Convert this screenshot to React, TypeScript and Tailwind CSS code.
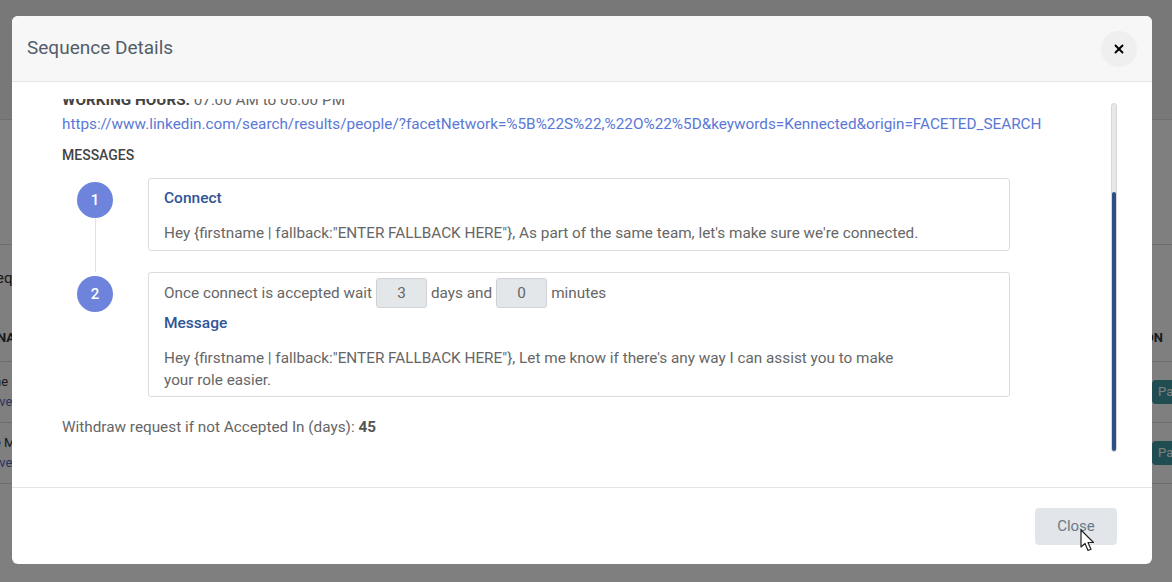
import { X } from 'lucide-react'

const LINK =
  'https://www.linkedin.com/search/results/people/?facetNetwork=%5B%22S%22,%22O%22%5D&keywords=Kennected&origin=FACETED_SEARCH'

const CONNECT_MSG =
  'Hey {firstname | fallback:"ENTER FALLBACK HERE"}, As part of the same team, let\'s make sure we\'re connected.'

const FOLLOW_MSG =
  'Hey {firstname | fallback:"ENTER FALLBACK HERE"}, Let me know if there\'s any way I can assist you to make your role easier.'

function BackgroundPage() {
  return (
    <div className="absolute inset-0 flex flex-col bg-white text-[13px] text-[#333]">
      <div className="h-[120px] border-b border-[#ddd] bg-[#f1f1f1]" />
      <div className="h-[125px] border-b border-[#ddd]" />
      <div className="pt-[22px]">
        <span className="-ml-[4px] text-[15px]">equests</span>
      </div>
      <div className="mt-[38px] flex items-center justify-between border-b border-[#ddd] pb-[14px] font-bold">
        <span className="-ml-[3px]">NAME</span>
        <span className="mr-[9px]">ACTION</span>
      </div>
      <div className="flex items-center justify-between border-b border-[#ddd] py-[10px]">
        <div className="flex flex-col leading-5">
          <span className="-ml-[6px]">ne</span>
          <span className="-ml-[4px] text-[#5066c0]">ive</span>
        </div>
        <span className="-mr-[28px] rounded-sm bg-[#3f9aa4] px-[6px] py-[2px] text-white">Pause</span>
      </div>
      <div className="flex items-center justify-between border-b border-[#ddd] py-[10px]">
        <div className="flex flex-col leading-5">
          <span className="-ml-[6px]">e M</span>
          <span className="-ml-[4px] text-[#5066c0]">ive</span>
        </div>
        <span className="-mr-[28px] rounded-sm bg-[#3f9aa4] px-[6px] py-[2px] text-white">Pause</span>
      </div>
    </div>
  )
}

function StepCircle({ n }: { n: number }) {
  return (
    <div className="mt-1 flex h-9 w-9 shrink-0 items-center justify-center rounded-full bg-[#6d83dc] text-[15px] font-medium text-white">
      {n}
    </div>
  )
}

function NumBox({ value }: { value: string }) {
  return (
    <span className="mx-[4px] flex h-[30px] w-[51px] items-center justify-center rounded-[3px] border border-[#cfd3d7] bg-[#e4e7ea] text-[#666]">
      {value}
    </span>
  )
}

export default function App() {
  return (
    <div className="relative h-[582px] w-[1172px] overflow-hidden font-['Roboto',sans-serif]">
      <BackgroundPage />
      <div className="absolute inset-0 bg-black/50 px-3 pt-4">
        <div className="flex h-[548px] w-[1140px] flex-col overflow-hidden rounded-md bg-white">
          <div className="flex h-[66px] shrink-0 items-center justify-between border-b border-[#e6e6e6] bg-[#f7f7f7] px-[15px]">
            <h2 className="text-[19px] text-[#525d69]">Sequence Details</h2>
            <button className="flex h-9 w-9 items-center justify-center rounded-full bg-[#efefef] text-black">
              <X size={14} strokeWidth={3.2} />
            </button>
          </div>

          <div className="relative flex-1 pt-[17px]">
            <div className="h-[353px] overflow-hidden pl-[50px] text-[15.3px] text-[#666]">
              <div className="-mt-[9px] leading-5">
                <span className="font-bold uppercase text-[#444]">Working Hours:</span> 07:00 AM to 06:00 PM
              </div>
              <div className="mt-[4px] leading-5 text-[#5a78d6]">{LINK}</div>
              <div className="mt-[11px] text-[14px] font-medium uppercase leading-5 text-[#444]">Messages</div>

              <div className="mt-[13px] flex">
                <div className="flex w-[86px] shrink-0 flex-col items-center pr-[20px]">
                  <StepCircle n={1} />
                  <div className="w-px flex-1 bg-[#e2e2e2]" />
                </div>
                <div className="mb-[21px] w-[862px] rounded-[3px] border border-[#dcdcdc] px-[15px] pb-[7px] pt-[9px]">
                  <div className="text-[15.5px] font-medium leading-5 text-[#2f5597]">Connect</div>
                  <div className="mt-[15px] leading-5">{CONNECT_MSG}</div>
                </div>
              </div>

              <div className="flex">
                <div className="flex w-[86px] shrink-0 flex-col items-center pr-[20px]">
                  <StepCircle n={2} />
                </div>
                <div className="w-[862px] rounded-[3px] border border-[#dcdcdc] px-[15px] py-[5px]">
                  <div className="flex h-[30px] items-center">
                    <span>Once connect is accepted wait</span>
                    <NumBox value="3" />
                    <span>days and</span>
                    <NumBox value="0" />
                    <span>minutes</span>
                  </div>
                  <div className="mt-[5px] text-[15.5px] font-medium leading-5 text-[#2f5597]">Message</div>
                  <p className="mt-[14px] max-w-[745px] leading-[22px]">{FOLLOW_MSG}</p>
                </div>
              </div>

              <div className="mt-[20px] leading-5">
                Withdraw request if not Accepted In (days): <span className="font-bold text-[#555]">45</span>
              </div>
            </div>

            {/* custom scrollbar */}
            <div className="absolute right-[35px] top-[21px] flex h-[349px] w-[6px] flex-col rounded-full border border-[#d6d6d6] bg-[#e8e8e8]">
              <div className="mt-[88px] flex-1 rounded-full bg-[#2d4f86]" />
            </div>
          </div>

          <div className="flex h-[77px] shrink-0 items-start justify-end border-t border-[#e6e6e6] pr-[35px] pt-[20px]">
            <button className="relative h-[37px] w-[82px] rounded-[4px] bg-[#e2e6ea] text-[15px] text-[#6b7886]">
              Close
              <svg className="absolute left-[45px] top-[21px]" width="16" height="24" viewBox="0 0 16 24">
                <path
                  d="M1 1 L1 18 L5 14.5 L8 21.5 L11 20.2 L8 13.5 L13.5 13.5 Z"
                  fill="#fff"
                  stroke="#222"
                  strokeWidth="1.2"
                  strokeLinejoin="round"
                />
              </svg>
            </button>
          </div>
        </div>
      </div>
    </div>
  )
}
